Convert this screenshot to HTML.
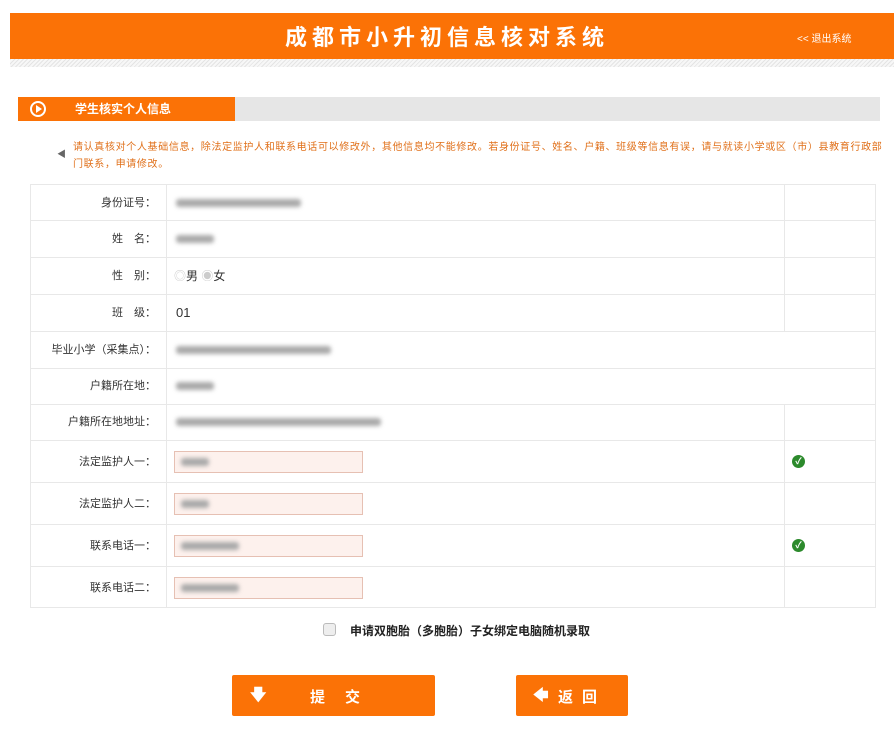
<!DOCTYPE html>
<html><head><meta charset="utf-8"><style>
*{margin:0;padding:0;box-sizing:border-box}
body{width:894px;height:744px;background:#fff;font-family:"Liberation Sans","Noto Sans CJK SC",sans-serif;position:relative;overflow:hidden;font-size:11px;color:#333}
.a{position:absolute}
.hdr{left:10px;top:13px;width:884px;height:46px;background:#fb7206}
.title{left:0;width:894px;top:20px;text-align:center;color:#fff;font-size:22px;font-weight:bold;letter-spacing:5px}
.exit{left:797px;top:30px;color:#fff;font-size:10px}
.stripe{left:10px;top:59px;width:884px;height:8px;background:repeating-linear-gradient(135deg,#e4e4e4 0 1px,#f7f7f7 1px 3px)}
.bar{left:18px;top:97px;width:862px;height:24px;background:#e6e6e6}
.tab{left:18px;top:97px;width:217px;height:24px;background:#fb7206;color:#fff;font-weight:bold;font-size:12px;line-height:24px;padding-left:57px}
.circ{left:30px;top:101px;width:16px;height:16px;border:2px solid #fff;border-radius:50%}
.notice{left:73px;top:139px;width:812px;color:#e0701a;font-size:10px;letter-spacing:0.65px;line-height:17px}
.row{position:absolute;left:30px;width:846px;border:1px solid #e8e8e8;border-top:none}
.lab{position:absolute;left:0;width:135px;text-align:right;padding-right:10px;font-size:11px;color:#333}
.vl{position:absolute;left:135px;top:0;bottom:0;border-left:1px solid #e8e8e8}
.vr{position:absolute;left:753px;top:0;bottom:0;border-left:1px solid #e8e8e8}
.blur{position:absolute;height:8px;background:#aaa;filter:blur(2px);border-radius:3px}
.inp{position:absolute;left:143px;width:189px;height:22px;background:#fdf1ed;border:1px solid #e6c0b3}
.ok{position:absolute;left:761px;width:13px;height:13px;border-radius:50%;background:#2c8a2c;color:#fff;font-size:9px;line-height:13px;text-align:center;font-weight:bold}
.btn{background:#fb7206;color:#fff;font-weight:bold;font-size:15px;border-radius:2px}
</style></head><body>
<div class="a hdr"></div>
<div class="a title">成都市小升初信息核对系统</div>
<div class="a exit">&lt;&lt; 退出系统</div>
<div class="a stripe"></div>
<div class="a bar"></div>
<div class="a tab">学生核实个人信息</div>
<div class="a circ"></div>
<div class="a" style="left:36px;top:105px;width:0;height:0;border-left:6px solid #fff;border-top:4px solid transparent;border-bottom:4px solid transparent"></div>
<div class="a" style="left:57px;top:147px;color:#666;font-size:9px">◀</div>
<div class="a notice">请认真核对个人基础信息，除法定监护人和联系电话可以修改外，其他信息均不能修改。若身份证号、姓名、户籍、班级等信息有误，请与就读小学或区（市）县教育行政部门联系，申请修改。</div>

<div class="row" style="top:184px;height:37px;border-top:1px solid #e8e8e8"><div class="lab" style="top:9px">身份证号：</div><div class="vl"></div><div class="vr"></div><div class="blur" style="left:145px;top:14px;width:125px"></div></div>
<div class="row" style="top:221px;height:37px"><div class="lab" style="top:9px">姓　名：</div><div class="vl"></div><div class="vr"></div><div class="blur" style="left:145px;top:14px;width:38px"></div></div>
<div class="row" style="top:258px;height:37px"><div class="lab" style="top:9px">性　别：</div><div class="vl"></div><div class="vr"></div><div class="a" style="left:143px;top:9px;font-size:12px"><span style="color:#ccc">◎</span>男 <span style="color:#ccc">◉</span>女</div></div>
<div class="row" style="top:295px;height:37px"><div class="lab" style="top:9px">班　级：</div><div class="vl"></div><div class="vr"></div><div class="a" style="left:145px;top:10px;font-size:13px">01</div></div>
<div class="row" style="top:332px;height:37px"><div class="lab" style="top:9px">毕业小学（采集点）：</div><div class="vl"></div><div class="blur" style="left:145px;top:14px;width:155px"></div></div>
<div class="row" style="top:369px;height:36px"><div class="lab" style="top:8px">户籍所在地：</div><div class="vl"></div><div class="blur" style="left:145px;top:13px;width:38px"></div></div>
<div class="row" style="top:405px;height:36px"><div class="lab" style="top:8px">户籍所在地地址：</div><div class="vl"></div><div class="vr"></div><div class="blur" style="left:145px;top:13px;width:205px"></div></div>
<div class="row" style="top:441px;height:42px"><div class="lab" style="top:12px">法定监护人一：</div><div class="vl"></div><div class="vr"></div><div class="inp" style="top:10px"></div><div class="blur" style="left:150px;top:17px;width:28px"></div><div class="ok" style="top:14px">✓</div></div>
<div class="row" style="top:483px;height:42px"><div class="lab" style="top:12px">法定监护人二：</div><div class="vl"></div><div class="vr"></div><div class="inp" style="top:10px"></div><div class="blur" style="left:150px;top:17px;width:28px"></div></div>
<div class="row" style="top:525px;height:42px"><div class="lab" style="top:12px">联系电话一：</div><div class="vl"></div><div class="vr"></div><div class="inp" style="top:10px"></div><div class="blur" style="left:150px;top:17px;width:58px"></div><div class="ok" style="top:14px">✓</div></div>
<div class="row" style="top:567px;height:41px"><div class="lab" style="top:12px">联系电话二：</div><div class="vl"></div><div class="vr"></div><div class="inp" style="top:10px"></div><div class="blur" style="left:150px;top:17px;width:58px"></div></div>

<div class="a" style="left:323px;top:623px;width:13px;height:13px;border:1px solid #bbb;border-radius:3px;background:#eee"></div>
<div class="a" style="left:350px;top:622px;font-size:12px;font-weight:bold;color:#222">申请双胞胎（多胞胎）子女绑定电脑随机录取</div>

<div class="a btn" style="left:232px;top:675px;width:203px;height:41px"><span class="a" style="left:18px;top:9px;font-size:16px">🡇</span><span class="a" style="left:78px;top:11px;letter-spacing:20px">提交</span></div>
<div class="a btn" style="left:516px;top:675px;width:112px;height:41px"><span class="a" style="left:17px;top:10px;font-size:15px">🡄</span><span class="a" style="left:42px;top:11px;letter-spacing:9px">返回</span></div>
</body></html>
